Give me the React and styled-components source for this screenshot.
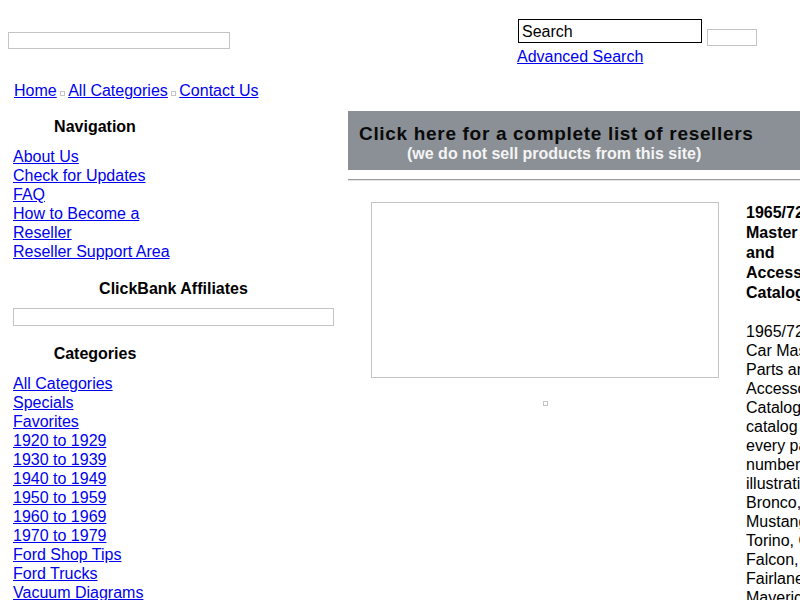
import styled, { createGlobalStyle } from "styled-components";

const GlobalStyle = createGlobalStyle`
  html { overflow: hidden; }
  body {
    margin: 8px 0 8px 8px;
    font-family: "Liberation Sans", Arial, sans-serif;
    font-size: 16px;
    color: #000;
    background: #fff;
  }
  a { color: #0000ee; }
`;

const Page = styled.div`
  width: 792px;
  overflow: hidden;
`;

const Inner = styled.div`
  width: 1100px;
`;

const Header = styled.div`
  display: flex;
  align-items: flex-start;
`;

const LogoCell = styled.div`
  width: 509px;
  padding-top: 24px;
`;

const EmptyBox = styled.div`
  width: ${(p) => p.$w}px;
  height: ${(p) => p.$h}px;
  border: 1px solid #c4c4c4;
  box-sizing: border-box;
`;

const SearchCell = styled.div`
  padding-top: 11px;
`;

const SearchRow = styled.div`
  display: flex;
  align-items: flex-start;
  gap: 5px;
`;

const SearchInput = styled.input`
  width: 184px;
  height: 24px;
  margin-left: 1px;
  box-sizing: border-box;
  border: 1px solid #000;
  padding: 1px 3px 0;
  font: 16px "Liberation Sans", Arial, sans-serif;
  color: #000;
  outline: none;
`;

const SearchButton = styled.button`
  width: 50px;
  height: 17px;
  margin-top: 10px;
  border: 1px solid #c4c4c4;
  background: #fff;
  padding: 0;
`;

const AdvancedLink = styled.a`
  display: inline-block;
  margin-top: 1px;
  line-height: 19px;
`;

const Crumbs = styled.div`
  margin-top: 15px;
  padding-left: 6px;
  line-height: 19px;
`;

const Dot = styled.span`
  display: inline-block;
  width: 5px;
  height: 5px;
  box-sizing: border-box;
  border: 1px solid #c4c4c4;
  margin: 0 3px 0 3.5px;
`;

const Main = styled.div`
  display: flex;
  margin-top: 11px;
`;

const Sidebar = styled.div`
  width: 321px;
  margin-left: 5px;
  flex-shrink: 0;
`;

const Panel = styled.div`
  width: 164px;
`;

const Heading = styled.div`
  font-weight: bold;
  text-align: center;
  line-height: 19px;
  margin-top: ${(p) => p.$top}px;
  margin-bottom: ${(p) => p.$bottom}px;
`;

const LinkList = styled.div`
  display: flex;
  flex-direction: column;
  align-items: flex-start;
  line-height: 19px;
`;

const Content = styled.div`
  margin-left: 14px;
  flex: 1;
`;

const Banner = styled.a`
  display: block;
  height: 59px;
  background: #8b9096;
  box-sizing: border-box;
  padding: 12px 0 0 11px;
  text-decoration: none;
  font-weight: bold;
`;

const BannerTitle = styled.div`
  font-size: 19px;
  letter-spacing: 0.68px;
  line-height: 22px;
  color: #0a0a0a;
`;

const BannerSub = styled.div`
  font-size: 16px;
  line-height: 18px;
  padding-left: 48px;
  color: #f4f4f4;
`;

const Rule = styled.hr`
  margin: 9px 0 0;
  border: 0;
  border-top: 1px solid #9a9a9a;
  border-bottom: 1px solid #e4e4e4;
`;

const Product = styled.div`
  display: flex;
  align-items: flex-start;
  padding: 21px 0 0 23px;
`;

const Figure = styled.div`
  display: flex;
  flex-direction: column;
  align-items: center;
`;

const Thumb = styled.span`
  width: 5px;
  height: 5px;
  box-sizing: border-box;
  border: 1px solid #c4c4c4;
  margin-top: 23px;
`;

const Details = styled.div`
  width: 100px;
  margin-left: 27px;
`;

const Title = styled.div`
  font-weight: bold;
  line-height: 20px;
  padding-top: 1px;
`;

const Blurb = styled.p`
  margin: 19px 0 0;
  line-height: 19px;
`;

const navLinks = [
  "About Us",
  "Check for Updates",
  "FAQ",
  "How to Become a Reseller",
  "Reseller Support Area",
];

const categories = [
  "All Categories",
  "Specials",
  "Favorites",
  "1920 to 1929",
  "1930 to 1939",
  "1940 to 1949",
  "1950 to 1959",
  "1960 to 1969",
  "1970 to 1979",
  "Ford Shop Tips",
  "Ford Trucks",
  "Vacuum Diagrams",
];

export default function App() {
  return (
    <Page>
      <GlobalStyle />
      <Inner>
        <Header>
          <LogoCell>
            <EmptyBox $w={222} $h={17} />
          </LogoCell>
          <SearchCell>
            <SearchRow>
              <SearchInput defaultValue="Search" />
              <SearchButton />
            </SearchRow>
            <AdvancedLink href="#">Advanced Search</AdvancedLink>
          </SearchCell>
        </Header>

        <Crumbs>
          <a href="#">Home</a>
          <Dot />
          <a href="#">All Categories</a>
          <Dot />
          <a href="#">Contact Us</a>
        </Crumbs>

        <Main>
          <Sidebar>
            <Panel>
              <Heading $top={6} $bottom={11}>Navigation</Heading>
              <LinkList>
                {navLinks.map((l) => (
                  <a href="#" key={l}>{l}</a>
                ))}
              </LinkList>
            </Panel>
            <Heading $top={18} $bottom={10}>ClickBank Affiliates</Heading>
            <EmptyBox $w={321} $h={18} />
            <Panel>
              <Heading $top={18} $bottom={11}>Categories</Heading>
              <LinkList>
                {categories.map((l) => (
                  <a href="#" key={l}>{l}</a>
                ))}
              </LinkList>
            </Panel>
          </Sidebar>

          <Content>
            <Banner href="#">
              <BannerTitle>Click here for a complete list of resellers</BannerTitle>
              <BannerSub>(we do not sell products from this site)</BannerSub>
            </Banner>
            <Rule />
            <Product>
              <Figure>
                <EmptyBox $w={348} $h={176} />
                <Thumb />
              </Figure>
              <Details>
                <Title>1965/72 Ford Master Parts and Accessories Catalog</Title>
                <Blurb>
                  1965/72 Ford Car Master Parts and Accessories Catalog. This
                  catalog has every part number and illustration for Bronco,
                  Mustang, Torino, GT, Falcon, Fairlane, Maverick, Comet and
                  Ranchero.
                </Blurb>
              </Details>
            </Product>
          </Content>
        </Main>
      </Inner>
    </Page>
  );
}
